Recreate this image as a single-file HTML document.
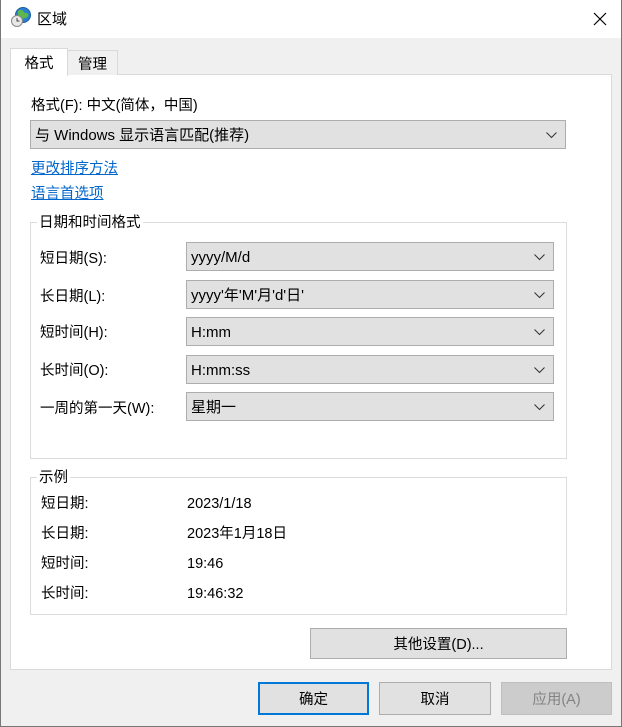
<!DOCTYPE html>
<html><head><meta charset="utf-8"><style>
*{margin:0;padding:0;box-sizing:border-box}
body{width:622px;height:727px;background:#f0f0f0;font-family:"Liberation Sans","Noto Sans CJK SC",sans-serif;font-size:14.5px;color:#000;position:relative;overflow:hidden}
.a{position:absolute;white-space:nowrap;line-height:20px;height:20px}
.win{position:absolute;left:0;top:0;width:622px;height:727px;border:1px solid #777;border-top:none}
.title{position:absolute;left:0;top:0;width:622px;height:38px;background:#fff}
.panel{position:absolute;left:10px;top:74px;width:602px;height:596px;background:#fff;border:1px solid #d9d9d9}
.combo{position:absolute;background:#e1e1e1;border:1px solid #adadad;height:29px;display:flex;align-items:center;padding:3px 0 0 4px;font-size:15px;line-height:20px}
.combo svg{position:absolute;right:8px;top:11px}
.grp{position:absolute;border:1px solid #dcdcdc}
.lg{position:absolute;background:#fff;padding:0 2px;line-height:16px}
.btn{position:absolute;background:#e1e1e1;border:1px solid #adadad;display:flex;align-items:center;justify-content:center;font-size:14.5px;line-height:20px;padding-top:2px}
a{color:#0066cc;text-decoration:underline}
</style></head><body>
<div class="title"></div>
<svg class="a" style="left:10px;top:6px;height:22px" width="22" height="22" viewBox="0 0 22 22">
<circle cx="13" cy="9" r="7.5" fill="#2a7fd0"/><path d="M8 5c2-2 5-1 6 1s3 0 4 2-1 4-3 4-2 2-4 1-3-3-3-4z" fill="#5cb84a"/><circle cx="13" cy="9" r="7.5" fill="none" stroke="#1a5fa0"/>
<circle cx="7" cy="15" r="5.5" fill="#e8e8e8" stroke="#888"/><path d="M7 12v3h2.5" stroke="#444" fill="none"/></svg>
<div class="a" style="left:37px;top:10px;font-size:15px">区域</div>
<svg class="a" style="left:593px;top:12px;height:14px" width="14" height="14"><path d="M1 1L13 13M13 1L1 13" stroke="#000" stroke-width="1.2"/></svg>
<div class="panel"></div>
<div class="btn" style="left:67px;top:50px;width:51px;height:25px;background:#f0f0f0;border-color:#d9d9d9;border-bottom:none;padding-top:4px">管理</div>
<div class="btn" style="left:10px;top:48px;width:58px;height:28px;background:#fff;border-color:#d9d9d9;border-bottom:none">格式</div>
<div class="a" style="left:31px;top:96px">格式(F): 中文(简体，中国)</div>
<div class="combo" style="left:30px;top:120px;width:536px">与 Windows 显示语言匹配(推荐)<svg width="11" height="7"><path d="M.5 .5l5 5 5-5" stroke="#333" fill="none"/></svg></div>
<div class="a" style="left:31px;top:159px"><a>更改排序方法</a></div>
<div class="a" style="left:31px;top:184px"><a>语言首选项</a></div>
<div class="grp" style="left:30px;top:222px;width:537px;height:237px"></div>
<div class="lg" style="left:37px;top:215px">日期和时间格式</div>
<div class="a" style="left:40px;top:249px">短日期(S):</div>
<div class="a" style="left:40px;top:287px">长日期(L):</div>
<div class="a" style="left:40px;top:323px">短时间(H):</div>
<div class="a" style="left:40px;top:361px">长时间(O):</div>
<div class="a" style="left:40px;top:399px">一周的第一天(W):</div>
<div class="combo" style="left:186px;top:242px;width:368px">yyyy/M/d<svg width="11" height="7"><path d="M.5 .5l5 5 5-5" stroke="#333" fill="none"/></svg></div>
<div class="combo" style="left:186px;top:280px;width:368px">yyyy'年'M'月'd'日'<svg width="11" height="7"><path d="M.5 .5l5 5 5-5" stroke="#333" fill="none"/></svg></div>
<div class="combo" style="left:186px;top:317px;width:368px">H:mm<svg width="11" height="7"><path d="M.5 .5l5 5 5-5" stroke="#333" fill="none"/></svg></div>
<div class="combo" style="left:186px;top:355px;width:368px">H:mm:ss<svg width="11" height="7"><path d="M.5 .5l5 5 5-5" stroke="#333" fill="none"/></svg></div>
<div class="combo" style="left:186px;top:392px;width:368px">星期一<svg width="11" height="7"><path d="M.5 .5l5 5 5-5" stroke="#333" fill="none"/></svg></div>
<div class="grp" style="left:30px;top:477px;width:537px;height:138px"></div>
<div class="lg" style="left:37px;top:470px">示例</div>
<div class="a" style="left:41px;top:494px">短日期:</div>
<div class="a" style="left:41px;top:524px">长日期:</div>
<div class="a" style="left:41px;top:554px">短时间:</div>
<div class="a" style="left:41px;top:584px">长时间:</div>
<div class="a" style="left:187px;top:494px">2023/1/18</div>
<div class="a" style="left:187px;top:524px">2023年1月18日</div>
<div class="a" style="left:187px;top:554px">19:46</div>
<div class="a" style="left:187px;top:584px">19:46:32</div>
<div class="btn" style="left:310px;top:628px;width:257px;height:31px">其他设置(D)...</div>
<div class="btn" style="left:258px;top:682px;width:111px;height:33px;border:2px solid #0078d7">确定</div>
<div class="btn" style="left:379px;top:682px;width:112px;height:33px">取消</div>
<div class="btn" style="left:501px;top:682px;width:111px;height:33px;background:#cccccc;border-color:#bfbfbf;color:#838383">应用(A)</div>
<div class="win"></div>
</body></html>
